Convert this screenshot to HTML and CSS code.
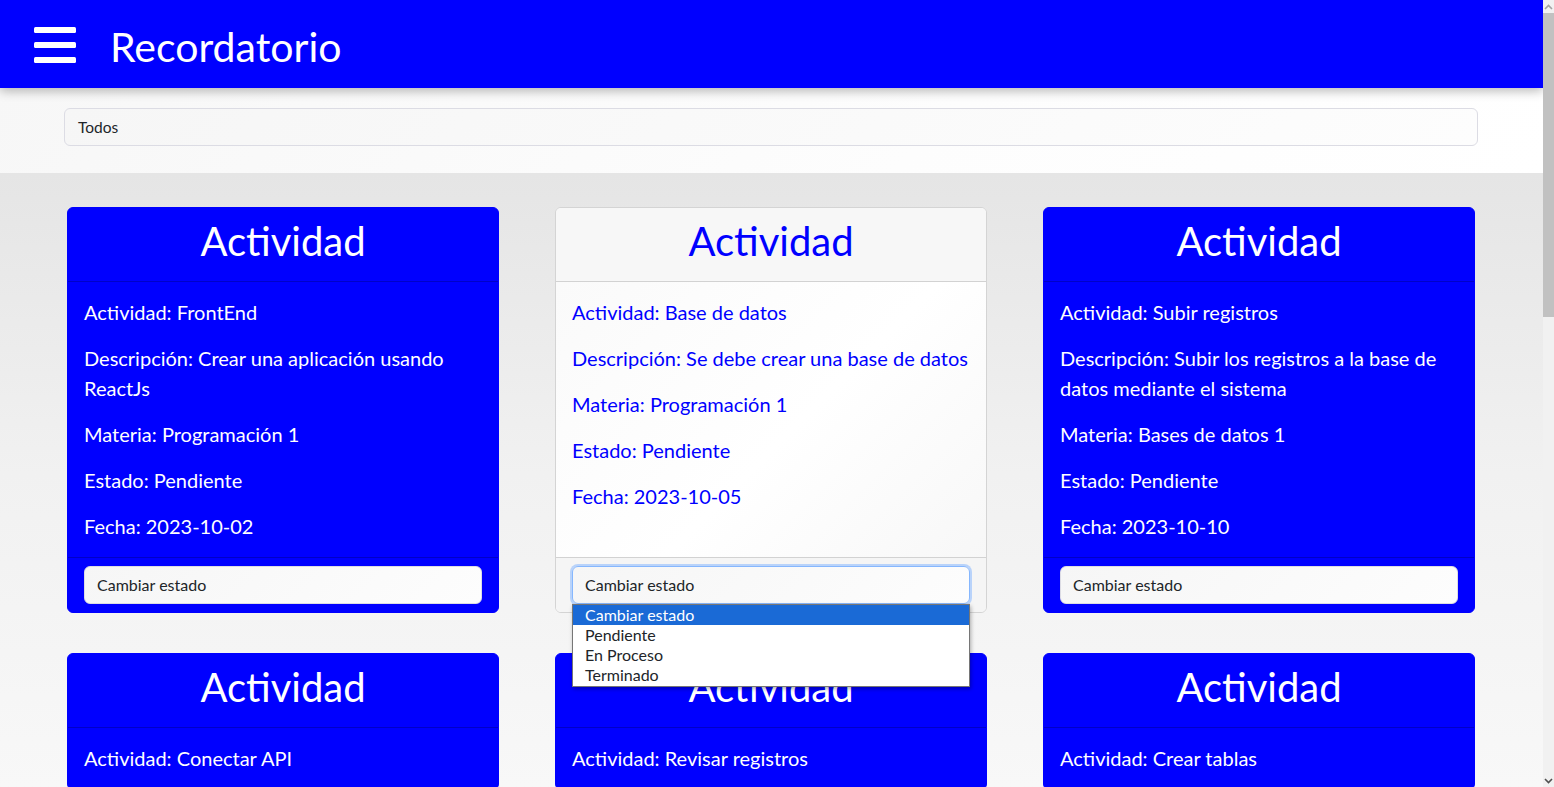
FILE: index.html
```html
<!DOCTYPE html>
<html lang="es">
<head>
<meta charset="utf-8">
<title>Recordatorio</title>
<link rel="stylesheet" href="styles.css">
</head>
<body>
<div class="viewport">
  <div class="page">
    <header class="topbar">
      <svg class="burger" width="42" height="38" viewBox="0 0 42 38">
        <rect x="0" y="1" width="42" height="6" rx="1.5" fill="#fff"/>
        <rect x="0" y="16" width="42" height="6" rx="1.5" fill="#fff"/>
        <rect x="0" y="31" width="42" height="6" rx="1.5" fill="#fff"/>
      </svg>
      <h1 class="brand">Recordatorio</h1>
    </header>

    <section class="filter">
      <div class="container">
        <div class="select">Todos</div>
      </div>
    </section>

    <main class="content">
      <div class="cards">
        <article class="card card-blue">
          <div class="card-header">Actividad</div>
          <div class="card-body">
            <p>Actividad: FrontEnd</p>
            <p>Descripción: Crear una aplicación usando ReactJs</p>
            <p>Materia: Programación 1</p>
            <p>Estado: Pendiente</p>
            <p>Fecha: 2023-10-02</p>
          </div>
          <div class="card-footer"><div class="select">Cambiar estado</div></div>
        </article>

        <article class="card card-light">
          <div class="card-header">Actividad</div>
          <div class="card-body">
            <p>Actividad: Base de datos</p>
            <p>Descripción: Se debe crear una base de datos</p>
            <p>Materia: Programación 1</p>
            <p>Estado: Pendiente</p>
            <p>Fecha: 2023-10-05</p>
          </div>
          <div class="card-footer">
            <div class="select select-focus">Cambiar estado</div>
            <ul class="dropdown">
              <li class="active">Cambiar estado</li>
              <li>Pendiente</li>
              <li>En Proceso</li>
              <li>Terminado</li>
            </ul>
          </div>
        </article>

        <article class="card card-blue">
          <div class="card-header">Actividad</div>
          <div class="card-body">
            <p>Actividad: Subir registros</p>
            <p>Descripción: Subir los registros a la base de datos mediante el sistema</p>
            <p>Materia: Bases de datos 1</p>
            <p>Estado: Pendiente</p>
            <p>Fecha: 2023-10-10</p>
          </div>
          <div class="card-footer"><div class="select">Cambiar estado</div></div>
        </article>

        <article class="card card-blue">
          <div class="card-header">Actividad</div>
          <div class="card-body">
            <p>Actividad: Conectar API</p>
          </div>
        </article>

        <article class="card card-blue">
          <div class="card-header">Actividad</div>
          <div class="card-body">
            <p>Actividad: Revisar registros</p>
          </div>
        </article>

        <article class="card card-blue">
          <div class="card-header">Actividad</div>
          <div class="card-body">
            <p>Actividad: Crear tablas</p>
          </div>
        </article>
      </div>
    </main>
  </div>

  <div class="scrollbar">
    <div class="sb-arrow sb-up">
      <svg width="9" height="6" viewBox="0 0 9 6"><path d="M1 5 L4.5 1.5 L8 5" fill="none" stroke="#a3a3a3" stroke-width="1.6"/></svg>
    </div>
    <div class="sb-thumb"></div>
    <div class="sb-track"></div>
    <div class="sb-arrow sb-down">
      <svg width="9" height="6" viewBox="0 0 9 6"><path d="M1 1 L4.5 4.5 L8 1" fill="none" stroke="#505050" stroke-width="1.6"/></svg>
    </div>
  </div>
</div>
</body>
</html>
```

FILE: styles.css
```css
* { box-sizing: border-box; }

html, body {
  margin: 0;
  padding: 0;
  height: 787px;
  overflow: hidden;
}

body {
  font-family: Lato, "Open Sans", "Liberation Sans", sans-serif;
  color: #212529;
  background: #f8f8f8;
}

.viewport {
  display: flex;
  height: 787px;
}

.page {
  flex: 1;
  min-width: 0;
  display: flex;
  flex-direction: column;
  overflow: hidden;
}

.topbar {
  position: relative;
  z-index: 2;
  height: 88px;
  flex-shrink: 0;
  background: #0000ff;
  display: flex;
  align-items: center;
  padding-left: 34px;
  gap: 34px;
  box-shadow: 0 3px 10px rgba(0, 0, 0, 0.28);
}

.burger {
  display: block;
  margin-top: 1px;
}

.brand {
  margin: 0;
  color: #fff;
  font-size: 41px;
  font-weight: 400;
  line-height: 1;
  margin-top: 4px;
}

.filter {
  flex-shrink: 0;
  background: linear-gradient(135deg, #f7f7f7 0%, #fdfdfd 60%, #ffffff 100%);
  padding: 20px 0 27px;
}

.container {
  width: 1414px;
  margin-left: 64px;
}

.select {
  height: 38px;
  border: 1px solid #dcdce4;
  border-radius: 6px;
  background: linear-gradient(135deg, #f6f6f6, #fdfdfd);
  font-size: 16px;
  line-height: 36px;
  padding: 0 12px;
  color: #212529;
}

.filter .select {
  font-size: 15.5px;
  padding: 0 13px;
}

.content {
  flex: 1;
  background: linear-gradient(to bottom, #e5e5e5 0px, #f1f1f1 300px, #f8f8f8 614px);
  padding-top: 34px;
}

.cards {
  width: 1408px;
  margin-left: 67px;
  display: grid;
  grid-template-columns: repeat(3, 432px);
  column-gap: 56px;
  row-gap: 40px;
}

.card {
  position: relative;
  display: flex;
  flex-direction: column;
  border-radius: 6px;
  border: 1px solid;
}

.card-blue {
  background: #0000ff;
  border-color: #0000ff;
  color: #fff;
}

.card-light {
  background: linear-gradient(135deg, #f9f9f9, #ffffff 55%, #f6f6f6);
  border-color: #d4d4d4;
  color: #0000ff;
}

.card-header {
  height: 74px;
  text-align: center;
  font-size: 40px;
  line-height: 66px;
  border-bottom: 1px solid;
  border-radius: 5px 5px 0 0;
}

.card-blue .card-header { border-bottom-color: #0000c8; }
.card-light .card-header {
  background: #f7f7f7;
  border-bottom-color: #d2d2d2;
}

.card-body {
  flex: 1;
  padding: 15px 16px 0;
}

.card-body p {
  margin: 0 0 16px;
  font-size: 20px;
  line-height: 30px;
}

.card-footer {
  position: relative;
  padding: 8px 16px 8px;
  border-top: 1px solid;
}

.card-blue .card-footer { border-top-color: #0000c8; }
.card-light .card-footer {
  border-top-color: #d2d2d2;
  background: #f5f5f5;
  border-radius: 0 0 5px 5px;
}

.select-focus {
  border-color: #86b7fe;
  box-shadow: 0 0 0 2px rgba(134, 183, 254, 0.55);
}

.dropdown {
  position: absolute;
  z-index: 5;
  left: 16px;
  right: 16px;
  top: 46px;
  margin: 0;
  padding: 0;
  list-style: none;
  background: #fff;
  border: 1px solid #767676;
  box-shadow: 1px 2px 4px rgba(0, 0, 0, 0.3);
  color: #212529;
  font-size: 16px;
}

.dropdown li {
  height: 20px;
  line-height: 20px;
  padding-left: 12px;
}

.dropdown li:last-child {
  height: 21px;
}

.dropdown li.active {
  background: #1a6ad6;
  color: #fff;
}

.scrollbar {
  width: 11px;
  flex-shrink: 0;
  display: flex;
  flex-direction: column;
  background: #f1f1f1;
}

.sb-arrow {
  height: 13px;
  display: flex;
  align-items: center;
  justify-content: center;
}

.sb-thumb {
  height: 304px;
  background: #c1c1c1;
}

.sb-track {
  flex: 1;
}
```
